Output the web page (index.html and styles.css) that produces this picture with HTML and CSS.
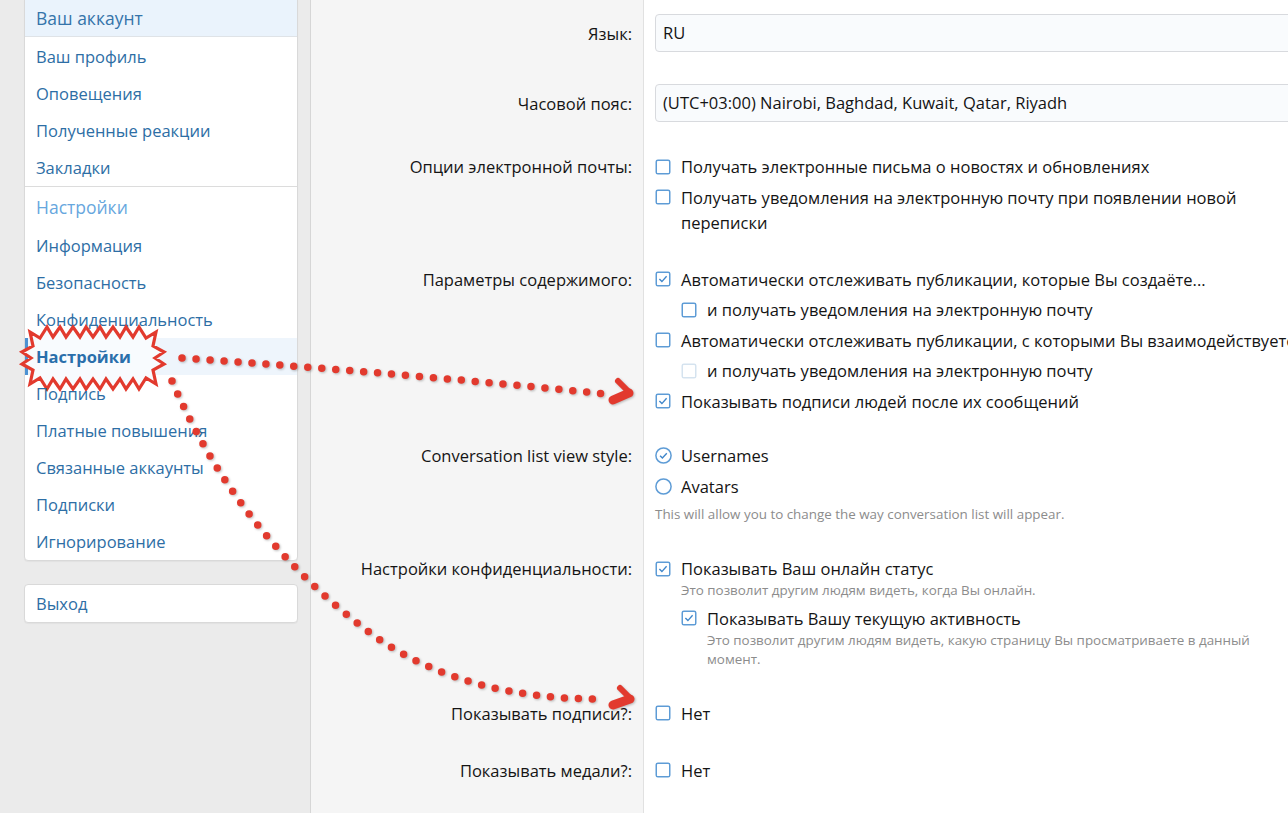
FILE: index.html
```html
<!DOCTYPE html>
<html lang="ru">
<head>
<meta charset="utf-8">
<title>Настройки</title>
<link rel="stylesheet" href="styles.css">
</head>
<body>
<div class="page">
  <aside class="sidebar">
    <nav class="nav-box nav-main">
      <div class="nav-group">
        <div class="nav-header">Ваш аккаунт</div>
        <ul class="nav-list nav-list-first">
          <li class="nav-item">Ваш профиль</li>
          <li class="nav-item">Оповещения</li>
          <li class="nav-item">Полученные реакции</li>
          <li class="nav-item">Закладки</li>
        </ul>
      </div>
      <div class="nav-group nav-group-sep">
        <div class="nav-header nav-header-light">Настройки</div>
        <ul class="nav-list">
          <li class="nav-item">Информация</li>
          <li class="nav-item">Безопасность</li>
          <li class="nav-item">Конфиденциальность</li>
          <li class="nav-item is-selected">
            <svg class="burst" viewBox="-73 -33 146 66" aria-hidden="true"><polygon points="0,-21 7,-31 13,-21 20,-31 27,-21 33,-31 40,-21 46,-31 53,-20 63,-26 60,-12 71,-6 62,0 71,6 60,12 63,26 53,20 46,31 40,21 33,31 27,21 20,31 13,21 7,31 0,21 -7,31 -13,21 -20,31 -27,21 -33,31 -40,21 -46,31 -53,20 -63,26 -60,12 -71,6 -62,0 -71,-6 -60,-12 -63,-26 -53,-20 -46,-31 -40,-21 -33,-31 -27,-21 -20,-31 -13,-21 -7,-31"/></svg>
            <span class="nav-label">Настройки</span>
          </li>
          <li class="nav-item">Подпись</li>
          <li class="nav-item">Платные повышения</li>
          <li class="nav-item">Связанные аккаунты</li>
          <li class="nav-item">Подписки</li>
          <li class="nav-item">Игнорирование</li>
        </ul>
      </div>
    </nav>
    <nav class="nav-box nav-logout">
      <div class="nav-item">Выход</div>
    </nav>
  </aside>

  <main class="content">
    <div class="form-row row-first">
      <div class="row-label row-label-field">Язык:</div>
      <div class="row-input"><div class="text-field">RU</div></div>
    </div>

    <div class="form-row">
      <div class="row-label row-label-field">Часовой пояс:</div>
      <div class="row-input"><div class="text-field">(UTC+03:00) Nairobi, Baghdad, Kuwait, Qatar, Riyadh</div></div>
    </div>

    <div class="form-row">
      <div class="row-label">Опции электронной почты:</div>
      <div class="row-input">
        <div class="check-list">
          <div class="check">
            <svg class="cb" viewBox="0 0 16 16"><rect x="1.25" y="1.25" width="13.5" height="13.5" rx="1.6"/></svg>
            <div class="check-body">Получать электронные письма о новостях и обновлениях</div>
          </div>
          <div class="check">
            <svg class="cb" viewBox="0 0 16 16"><rect x="1.25" y="1.25" width="13.5" height="13.5" rx="1.6"/></svg>
            <div class="check-body">Получать уведомления на электронную почту при появлении новой переписки</div>
          </div>
        </div>
      </div>
    </div>

    <div class="form-row">
      <div class="row-label">Параметры содержимого:</div>
      <div class="row-input">
        <div class="check-list">
          <div class="check">
            <svg class="cb" viewBox="0 0 16 16"><rect x="1.25" y="1.25" width="13.5" height="13.5" rx="1.6"/><path d="M4.4 8.1l2.5 2.5 4.7-5.3"/></svg>
            <div class="check-body">Автоматически отслеживать публикации, которые Вы создаёте...</div>
          </div>
          <div class="check check-sub">
            <svg class="cb" viewBox="0 0 16 16"><rect x="1.25" y="1.25" width="13.5" height="13.5" rx="1.6"/></svg>
            <div class="check-body">и получать уведомления на электронную почту</div>
          </div>
          <div class="check">
            <svg class="cb" viewBox="0 0 16 16"><rect x="1.25" y="1.25" width="13.5" height="13.5" rx="1.6"/></svg>
            <div class="check-body nowrap">Автоматически отслеживать публикации, с которыми Вы взаимодействуете...</div>
          </div>
          <div class="check check-sub">
            <svg class="cb cb-disabled" viewBox="0 0 16 16"><rect x="1.25" y="1.25" width="13.5" height="13.5" rx="1.6"/></svg>
            <div class="check-body">и получать уведомления на электронную почту</div>
          </div>
          <div class="check">
            <svg class="cb" viewBox="0 0 16 16"><rect x="1.25" y="1.25" width="13.5" height="13.5" rx="1.6"/><path d="M4.4 8.1l2.5 2.5 4.7-5.3"/></svg>
            <div class="check-body">Показывать подписи людей после их сообщений</div>
          </div>
        </div>
      </div>
    </div>

    <div class="form-row row-tight">
      <div class="row-label">Conversation list view style:</div>
      <div class="row-input">
        <div class="check-list">
          <div class="check">
            <svg class="rd" viewBox="0 0 17 17"><circle cx="8.5" cy="8.5" r="7.6"/><path d="M5.1 8.7l2.3 2.3 4.4-4.7"/></svg>
            <div class="check-body">Usernames</div>
          </div>
          <div class="check">
            <svg class="rd" viewBox="0 0 17 17"><circle cx="8.5" cy="8.5" r="7.6"/></svg>
            <div class="check-body">Avatars</div>
          </div>
        </div>
        <div class="hint explain">This will allow you to change the way conversation list will appear.</div>
      </div>
    </div>

    <div class="form-row">
      <div class="row-label">Настройки конфиденциальности:</div>
      <div class="row-input">
        <div class="check-list">
          <div class="check">
            <svg class="cb" viewBox="0 0 16 16"><rect x="1.25" y="1.25" width="13.5" height="13.5" rx="1.6"/><path d="M4.4 8.1l2.5 2.5 4.7-5.3"/></svg>
            <div class="check-body">Показывать Ваш онлайн статус
              <div class="hint">Это позволит другим людям видеть, когда Вы онлайн.</div>
            </div>
          </div>
          <div class="check check-sub">
            <svg class="cb" viewBox="0 0 16 16"><rect x="1.25" y="1.25" width="13.5" height="13.5" rx="1.6"/><path d="M4.4 8.1l2.5 2.5 4.7-5.3"/></svg>
            <div class="check-body">Показывать Вашу текущую активность
              <div class="hint">Это позволит другим людям видеть, какую страницу Вы просматриваете в данный момент.</div>
            </div>
          </div>
        </div>
      </div>
    </div>

    <div class="form-row">
      <div class="row-label">Показывать подписи?:</div>
      <div class="row-input">
        <div class="check">
          <svg class="cb" viewBox="0 0 16 16"><rect x="1.25" y="1.25" width="13.5" height="13.5" rx="1.6"/></svg>
          <div class="check-body">Нет</div>
        </div>
      </div>
    </div>

    <div class="form-row">
      <div class="row-label">Показывать медали?:</div>
      <div class="row-input">
        <div class="check">
          <svg class="cb" viewBox="0 0 16 16"><rect x="1.25" y="1.25" width="13.5" height="13.5" rx="1.6"/></svg>
          <div class="check-body">Нет</div>
        </div>
      </div>
    </div>
  </main>
</div>

<svg class="annot" viewBox="0 0 1288 813" aria-hidden="true">
  <path class="dots" d="M182 358 Q 400 373 606 394"/>
  <path class="head-thin" d="M618 381 L629 392"/>
  <path class="head-thick" d="M629 393 L613 400"/>
  <path class="dots" d="M172 381 Q 240 540 380 640 Q 470 700 604 699"/>
  <path class="head-thin" d="M620 688 L630 698"/>
  <path class="head-thick" d="M630 699 L613 705"/>
</svg>
</body>
</html>
```

FILE: styles.css
```css
* { box-sizing: border-box; }

html, body {
  margin: 0;
  height: 100%;
  overflow: hidden;
}

body {
  position: relative;
  background: #ebebeb;
  font-family: "Open Sans", "Noto Sans", sans-serif;
  font-size: 16.5px;
  color: #141414;
}

.page {
  display: flex;
  height: 813px;
}

/* ---------- sidebar ---------- */
.sidebar {
  flex: none;
  width: 310px;
  padding: 0 12px 0 24px;
}

.nav-box {
  background: #fff;
  border: 1px solid #d9d9d9;
  border-radius: 4px;
  box-shadow: 0 1px 1px rgba(0, 0, 0, 0.04);
}

.nav-main {
  margin-top: -1px;
  border-top-left-radius: 0;
  border-top-right-radius: 0;
}

.nav-logout {
  margin-top: 23px;
}

.nav-list {
  list-style: none;
  margin: 0;
  padding: 0;
}

.nav-list-first {
  padding-top: 1px;
}

.nav-header {
  background: #eaf3fc;
  color: #3574aa;
  font-size: 17.5px;
  line-height: 25px;
  padding: 5.5px 11px;
  border-bottom: 1px solid #dfe3e7;
}

.nav-group-sep {
  border-top: 1px solid #dcdcdc;
}

.nav-header-light {
  background: none;
  border-bottom: none;
  color: #67a7de;
  padding: 8px 11px 7px;
}

.nav-item {
  position: relative;
  color: #2d6ea5;
  line-height: 25px;
  padding: 6px 11px;
}

.nav-item.is-selected {
  background: #eef5fc;
  border-left: 3px solid #4b91d2;
  padding-left: 8px;
  font-weight: 700;
  color: #2a6fab;
}

.nav-label {
  position: relative;
  z-index: 1;
}

.burst {
  position: absolute;
  left: -8.5px;
  top: -13.5px;
  width: 146px;
  height: 66px;
  overflow: visible;
}

.burst polygon {
  fill: #f8fbfe;
  stroke: #e23a2e;
  stroke-width: 3.2;
  stroke-linejoin: miter;
}

/* ---------- content ---------- */
.content {
  flex: 1;
  min-width: 0;
  border-left: 1px solid #d6d6d6;
  background: linear-gradient(to right, #f5f5f5 0, #f5f5f5 332px, #e1e1e1 332px, #e1e1e1 333px, #fff 333px);
}

.form-row {
  display: grid;
  grid-template-columns: 333px minmax(0, 1fr);
  padding: 16px 0;
}

.row-first { padding-top: 14px; }
.row-tight { padding-top: 13.5px; }

.row-label {
  text-align: right;
  padding-right: 12px;
  line-height: 25px;
}

.row-label-field { padding-top: 6.5px; }

.row-input {
  padding: 0 26px 0 11px;
  line-height: 25px;
}

.text-field {
  height: 38px;
  margin-right: -80px;
  border: 1px solid #d8dade;
  border-radius: 4px;
  background: #f9fbfd;
  padding: 0 7px;
  line-height: 36px;
  white-space: nowrap;
}

.check-list {
  display: flex;
  flex-direction: column;
  gap: 5.5px;
}

.check {
  display: flex;
  align-items: flex-start;
  gap: 10px;
}

.check-sub { margin-left: 26px; }

.check-body { min-width: 0; }

.nowrap { white-space: nowrap; }

.cb {
  flex: none;
  width: 16px;
  height: 16px;
  margin-top: 4.5px;
}

.cb rect {
  fill: #fff;
  stroke: #5e9cd6;
  stroke-width: 1.5;
}

.cb path, .rd path {
  fill: none;
  stroke: #3f86ca;
  stroke-width: 1.4;
}

.cb-disabled rect { stroke: #d5e3ef; }

.rd {
  flex: none;
  width: 17px;
  height: 17px;
  margin-top: 4px;
  margin-right: -1px;
}

.rd circle {
  fill: #fff;
  stroke: #5e9cd6;
  stroke-width: 1.5;
}

.hint {
  font-size: 13.4px;
  line-height: 19px;
  color: #8c8c8c;
}

.explain { margin-top: 6.5px; }

/* ---------- annotation overlay ---------- */
.annot {
  position: absolute;
  left: 0;
  top: 0;
  width: 1288px;
  height: 813px;
  pointer-events: none;
  filter: drop-shadow(1px 1.5px 1px rgba(0, 0, 0, 0.25));
}

.dots {
  fill: none;
  stroke: #e23a2e;
  stroke-width: 7.5;
  stroke-linecap: round;
  stroke-dasharray: 0 14;
}

.head-thin,
.head-thick {
  fill: none;
  stroke: #e23a2e;
  stroke-linecap: round;
  stroke-linejoin: round;
}

.head-thin { stroke-width: 6; }
.head-thick { stroke-width: 9; }
```
